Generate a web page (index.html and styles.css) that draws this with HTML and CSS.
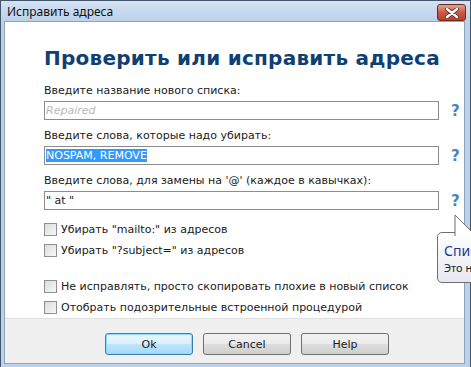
FILE: index.html
```html
<!DOCTYPE html>
<html lang="ru">
<head>
    <meta charset="UTF-8">
    <title>Исправить адреса</title>
    <link rel="stylesheet" href="styles.css">
</head>
<body>
    <div class="window">
        <div class="titlebar">
            <span class="title">Исправить адреса</span>
            <span class="close">
                <svg width="14" height="10" viewBox="0 0 14 10">
                    <path d="M2 1 L12 9 M12 1 L2 9" stroke="#5a2a22" stroke-width="4" stroke-linecap="round"/>
                    <path d="M2 1 L12 9 M12 1 L2 9" stroke="#ffffff" stroke-width="2.4" stroke-linecap="round"/>
                </svg>
            </span>
        </div>
        <div class="client">
            <div class="main">
                <h1>Проверить или исправить адреса</h1>

                <div class="field">
                    <div class="label">Введите название нового списка:</div>
                    <div class="row">
                        <div class="input placeholder">Repaired</div>
                        <span class="help">?</span>
                    </div>
                </div>

                <div class="field">
                    <div class="label">Введите слова, которые надо убирать:</div>
                    <div class="row">
                        <div class="input"><span class="selected">NOSPAM, REMOVE</span></div>
                        <span class="help">?</span>
                    </div>
                </div>

                <div class="field">
                    <div class="label">Введите слова, для замены на '@' (каждое в кавычках):</div>
                    <div class="row">
                        <div class="input">" at "</div>
                        <span class="help">?</span>
                    </div>
                </div>

                <div class="checks">
                    <label class="check"><span class="box"></span>Убирать "mailto:" из адресов</label>
                    <label class="check"><span class="box"></span>Убирать "?subject=" из адресов</label>
                </div>
                <div class="checks second">
                    <label class="check"><span class="box"></span>Не исправлять, просто скопировать плохие в новый список</label>
                    <label class="check"><span class="box"></span>Отобрать подозрительные встроенной процедурой</label>
                </div>
            </div>
            <div class="footer">
                <button class="btn default">Ok</button>
                <button class="btn">Cancel</button>
                <button class="btn">Help</button>
            </div>
        </div>

        <div class="balloon">
            <svg class="tail" width="20" height="22" viewBox="0 0 20 22">
                <path d="M1 22 L1 1 L19 19" fill="#ffffff" stroke="#6f6f6f" stroke-width="1"/>
            </svg>
            <div class="balloon-title">Список</div>
            <div class="balloon-text">Это название</div>
        </div>
    </div>
</body>
</html>
```

FILE: styles.css
```css
body {
    margin: 0;
    padding: 0;
    font-family: "DejaVu Sans", Verdana, sans-serif;
    font-size: 11px;
    color: #1a1a1a;
    overflow: hidden;
}

.window {
    position: relative;
    width: 471px;
    height: 367px;
    box-sizing: border-box;
    border: 1px solid #43566b;
    border-bottom: none;
    background: #bcd2ea;
    padding: 0 5px 5px 3px;
    display: flex;
    flex-direction: column;
}

.titlebar {
    height: 22px;
    display: flex;
    align-items: center;
    justify-content: space-between;
    background: linear-gradient(to bottom, #d3e2f3, #bcd1ea);
    margin: 0 -5px 0 -3px;
    padding: 0 4px 0 6px;
}

.title {
    font-family: "Noto Sans", "Open Sans", sans-serif;
    font-size: 12px;
    color: #101010;
}

.close {
    width: 27px;
    height: 15px;
    margin-top: 3px;
    border: 1px solid #6c2b22;
    border-radius: 3px;
    background: linear-gradient(to bottom, #e1a392, #cc5a45 50%, #b9402c);
    display: flex;
    align-items: center;
    justify-content: center;
}

.client {
    flex: 1;
    background: #ffffff;
    border: 1px solid #8fa4bb;
    display: flex;
    flex-direction: column;
}

.main {
    flex: 1;
    padding: 24px 0 0 39px;
}

h1 {
    margin: 0 0 14px 0;
    font-size: 20px;
    line-height: 24px;
    font-weight: bold;
    letter-spacing: 0.25px;
    color: #103f72;
}

.field {
    margin-bottom: 9px;
}

.label {
    height: 14px;
    line-height: 14px;
    margin-bottom: 3px;
}

.row {
    display: flex;
    align-items: center;
}

.input {
    width: 392px;
    height: 17px;
    border: 1px solid #8d8d8d;
    font-family: "DejaVu Sans", sans-serif;
    font-size: 11px;
    line-height: 17px;
    padding-left: 1px;
    white-space: pre;
}

.placeholder {
    color: #b8b8b8;
    font-style: italic;
}

.selected {
    background: #3399ff;
    color: #ffffff;
}

.help {
    margin-left: 12px;
    font-size: 15px;
    font-weight: bold;
    color: #4b82c0;
}

.checks {
    display: flex;
    flex-direction: column;
    margin-top: 1px;
}

.checks.second {
    margin-top: 15px;
}

.check {
    display: flex;
    align-items: center;
    height: 21px;
}

.box {
    width: 11px;
    height: 11px;
    border: 1px solid #8e8f8f;
    background: linear-gradient(135deg, #dcdcdc, #f7f7f7);
    margin-right: 4px;
}

.footer {
    height: 45px;
    background: #f0f0f0;
    border-top: 1px solid #dfdfdf;
    display: flex;
    align-items: flex-start;
    gap: 10px;
    padding: 14px 0 0 100px;
    box-sizing: border-box;
}

.btn {
    width: 88px;
    height: 22px;
    border: 1px solid #707070;
    border-radius: 3px;
    background: linear-gradient(to bottom, #f2f2f2, #ebebeb 50%, #dddddd 50%, #cfcfcf);
    font-family: "DejaVu Sans", sans-serif;
    font-size: 11px;
    color: #1a1a1a;
    padding: 0;
}

.btn.default {
    border-color: #3c7fb1;
    background: linear-gradient(to bottom, #eaf6fd, #d9f0fc 50%, #bee6fd 50%, #a7d9f5);
    box-shadow: inset 0 0 0 1px #7ee0fb;
}

.balloon {
    position: absolute;
    left: 436px;
    top: 231px;
    width: 80px;
    height: 51px;
    box-sizing: border-box;
    border: 1px solid #6f6f6f;
    border-radius: 5px;
    background: linear-gradient(to bottom, #ffffff, #e6e8f1);
    padding: 9px 0 0 6px;
    white-space: nowrap;
}

.tail {
    position: absolute;
    left: 16px;
    top: -19px;
}

.balloon-title {
    font-family: "Noto Sans", "Open Sans", sans-serif;
    font-size: 14px;
    line-height: 18px;
    color: #1c3a8c;
}

.balloon-text {
    font-family: "Noto Sans", "Open Sans", sans-serif;
    font-size: 11px;
    line-height: 15px;
    color: #222;
}
```
